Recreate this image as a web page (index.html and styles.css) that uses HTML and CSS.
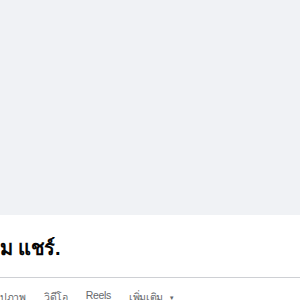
FILE: index.html
```html
<!DOCTYPE html>
<html lang="th">
<head>
  <meta charset="UTF-8">
  <title>แชร์.</title>
  <link rel="stylesheet" href="styles.css">
</head>
<body>
  <div class="cover"></div>
  <div class="profile">
    <h1 class="name">ม แชร์.</h1>
    <div class="divider"></div>
    <div class="tabs">
      <span class="tab">ปภาพ</span>
      <span class="tab">วิดีโอ</span>
      <span class="tab">Reels</span>
      <span class="tab">เพิ่มเติม <span class="caret">▼</span></span>
    </div>
  </div>
</body>
</html>
```

FILE: styles.css
```css
body {
  margin: 0;
  background: #fff;
  font-family: 'Liberation Sans', 'Noto Sans', sans-serif;
  overflow: hidden;
}
.cover {
  height: 215px;
  background: #f0f2f5;
}
.name {
  margin: 0;
  padding-top: 17px;
  height: 45px;
  font-size: 20px;
  font-weight: bold;
  color: #050505;
  letter-spacing: -0.3px;
}
.divider {
  height: 1px;
  background: #ced0d4;
  margin-bottom: 11px;
}
.tabs {
  display: flex;
  gap: 18px;
  font-size: 10.5px;
  font-weight: 500;
  color: #65676b;
  letter-spacing: -0.3px;
}
.caret {
  font-size: 6px;
  margin-left: 3px;
  vertical-align: 1px;
}
```
